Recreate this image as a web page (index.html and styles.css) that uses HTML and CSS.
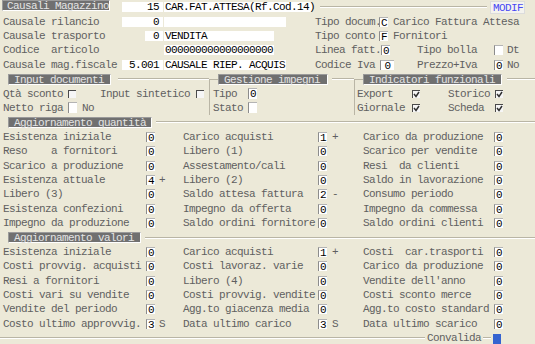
FILE: index.html
```html
<!DOCTYPE html>
<html lang="it">

<head>
    <meta charset="UTF-8">
    <title>Causali Magazzino</title>
    <link rel="stylesheet" href="styles.css">
</head>

<body>
    <div class="screen">
        <!-- testata causali -->
        <div class="top">
            <div class="trow">
                <div class="cap cap-main">Causali Magazzino</div>
                <div class="fld fld-num">15</div>
                <div class="fld w148">CAR.FAT.ATTESA(Rf.Cod.14)</div>
                <div class="tmode">
                    <span class="rule"></span>
                    <span class="mode">MODIF</span>
                </div>
            </div>
            <div class="trow">
                <div class="lbl">Causale rilancio</div>
                <div class="fld fld-num">0</div>
                <div class="fld w122"></div>
                <div class="tright">
                    <span class="lbl">Tipo docum.</span>
                    <span class="pair"><span class="box">C</span><span class="lbl">Carico Fattura Attesa</span></span>
                </div>
            </div>
            <div class="trow">
                <div class="lbl">Causale trasporto</div>
                <div class="fld fld-num short">0</div>
                <div class="fld w110">VENDITA</div>
                <div class="tright">
                    <span class="lbl">Tipo conto</span>
                    <span class="pair"><span class="box">F</span><span class="lbl">Fornitori</span></span>
                </div>
            </div>
            <div class="trow">
                <div class="lbl">Codice  articolo</div>
                <div></div>
                <div class="fld w110">000000000000000000</div>
                <div class="tright">
                    <span class="lbl">Linea fatt.</span>
                    <span class="box push">0</span>
                    <span class="lbl">Tipo bolla</span>
                    <span class="box"></span>
                    <span class="lbl">Dt</span>
                </div>
            </div>
            <div class="trow">
                <div class="lbl">Causale mag.fiscale</div>
                <div class="fld fld-num">5.001</div>
                <div class="fld w122">CAUSALE RIEP. ACQUIS</div>
                <div class="tright">
                    <span class="lbl">Codice Iva</span>
                    <span class="box wide">0</span>
                    <span class="lbl">Prezzo+Iva</span>
                    <span class="box">0</span>
                    <span class="lbl">No</span>
                </div>
            </div>
        </div>

        <!-- gruppi opzioni -->
        <div class="groups">
            <div class="grp">
                <div class="ghead">
                    <span class="cap cap-in">Input documenti</span>
                    <span class="rule"></span>
                </div>
                <div class="gbody body-in">
                    <span class="lbl">Qtà sconto</span><span class="cb"></span><span></span>
                    <span class="lbl">Input sintetico</span><span class="cb"></span>
                    <span class="lbl">Netto riga</span><span class="box tall"></span>
                    <span class="lbl no">No</span>
                </div>
            </div>
            <div class="grp">
                <div class="ghead">
                    <span class="corner"></span>
                    <span class="cap cap-imp">Gestione impegni</span>
                    <span class="rule"></span>
                </div>
                <div class="gbody body-imp side">
                    <span class="lbl">Tipo</span><span class="box tall">0</span>
                    <span class="lbl">Stato</span><span class="box tall"></span>
                </div>
            </div>
            <div class="grp">
                <div class="ghead">
                    <span class="corner"></span>
                    <span class="cap cap-ind">Indicatori funzionali</span>
                    <span class="rule"></span>
                </div>
                <div class="gbody body-ind side">
                    <span class="lbl">Export</span><span class="cb on"></span><span></span>
                    <span class="lbl">Storico</span><span class="cb on"></span>
                    <span class="lbl">Giornale</span><span class="cb on"></span><span></span>
                    <span class="lbl">Scheda</span><span class="cb on"></span>
                </div>
            </div>
        </div>

        <!-- aggiornamento quantita -->
        <div class="shead">
            <span class="cap cap-qta">Aggiornamento quantità</span>
            <span class="rule"></span>
        </div>
        <div class="sgrid" id="qta"></div>

        <!-- aggiornamento valori -->
        <div class="shead">
            <span class="cap cap-val">Aggiornamento valori</span>
            <span class="rule"></span>
        </div>
        <div class="sgrid" id="val"></div>

        <div class="foot">
            <span class="rule"></span>
            <span class="lbl">Convalida</span>
            <span class="rule tail"></span>
            <span class="ok"></span>
        </div>
    </div>

    <script>
        // righe: [etichetta, valore, segno] x 3 colonne
        const qta = [
            ['Esistenza iniziale', '0', '', 'Carico acquisti', '1', '+', 'Carico da produzione', '0'],
            ['Reso    a fornitori', '0', '', 'Libero (1)', '0', '', 'Scarico per vendite', '0'],
            ['Scarico a produzione', '0', '', 'Assestamento/cali', '0', '', 'Resi  da clienti', '0'],
            ['Esistenza attuale', '4', '+', 'Libero (2)', '0', '', 'Saldo in lavorazione', '0'],
            ['Libero (3)', '0', '', 'Saldo attesa fattura', '2', '-', 'Consumo periodo', '0'],
            ['Esistenza confezioni', '0', '', 'Impegno da offerta', '0', '', 'Impegno da commessa', '0'],
            ['Impegno da produzione', '0', '', 'Saldo ordini fornitore', '0', '', 'Saldo ordini clienti', '0']
        ];

        const val = [
            ['Esistenza iniziale', '0', '', 'Carico acquisti', '1', '+', 'Costi  car.trasporti', '0'],
            ['Costi provvig. acquisti', '0', '', 'Costi lavoraz. varie', '0', '', 'Carico da produzione', '0'],
            ['Resi a fornitori', '0', '', 'Libero (4)', '0', '', "Vendite dell'anno", '0'],
            ['Costi vari su vendite', '0', '', 'Costi provvig. vendite', '0', '', 'Costi sconto merce', '0'],
            ['Vendite del periodo', '0', '', 'Agg.to giacenza media', '0', '', 'Agg.to costo standard', '0'],
            ['Costo ultimo approvvig.', '3', 'S', 'Data ultimo carico', '3', 'S', 'Data ultimo scarico', '0']
        ];

        function renderGrid(id, rows) {
            const grid = document.getElementById(id);
            rows.forEach(r => {
                grid.innerHTML += `
          <span class="lbl">${r[0]}</span><span class="box">${r[1]}</span><span class="sign">${r[2]}</span>
          <span class="lbl">${r[3]}</span><span class="box">${r[4]}</span><span class="sign s2">${r[5]}</span>
          <span class="lbl">${r[6]}</span><span class="box">${r[7]}</span>
        `;
            });
        }

        renderGrid('qta', qta);
        renderGrid('val', val);
    </script>
</body>

</html>
```

FILE: styles.css
```css
* {
    box-sizing: border-box;
}

body {
    margin: 0;
    background-color: #ece9d8;
    font-family: "Liberation Mono", "Courier New", monospace;
    font-size: 11px;
    letter-spacing: -0.6px;
    color: #606060;
}

.screen {
    width: 535px;
    height: 344px;
    overflow: hidden;
}

.lbl {
    white-space: pre;
}

/* etichette scure di sezione */
.cap {
    display: block;
    height: 11px;
    line-height: 10px;
    padding-left: 5px;
    background-color: #707070;
    color: #e4e4e4;
    border-top: 1px solid #9a9a9a;
    border-left: 1px solid #9a9a9a;
    border-right: 1px solid #fff;
    border-bottom: 1px solid #fff;
    white-space: pre;
}

.rule {
    display: block;
    flex: 1;
    height: 2px;
    border-top: 1px solid #b9b5a5;
    border-bottom: 1px solid #fff;
}

/* campi */
.fld {
    height: 10px;
    line-height: 10px;
    padding: 0 1px;
    background-color: #fff;
    color: #000;
    white-space: pre;
}

.fld-num {
    width: 41px;
    text-align: right;
    padding-right: 4px;
}

.fld-num.short {
    width: 18px;
    justify-self: end;
    margin-right: 1px;
}

.w148 {
    width: 148px;
}

.w122 {
    width: 122px;
}

.w110 {
    width: 110px;
}

.box {
    display: block;
    width: 9px;
    height: 10px;
    line-height: 10px;
    padding-left: 1px;
    background-color: #fff;
    color: #000;
    border-left: 1px solid #8c8c8c;
    border-top: 1px solid #b4b4b4;
}

.box.tall {
    height: 11px;
}

.cb {
    display: block;
    width: 8px;
    height: 8px;
    background-color: #f6f6f6;
    border-top: 1px solid #4a4a4a;
    border-left: 1px solid #4a4a4a;
}

.cb.on {
    background: #f6f6f6 url("data:image/svg+xml,%3Csvg xmlns='http://www.w3.org/2000/svg' width='7' height='7'%3E%3Cpath d='M1 3 L3 5.5 L6 1' stroke='%23303030' stroke-width='1.5' fill='none'/%3E%3C/svg%3E") no-repeat 0 0;
}

/* testata */
.top {
    height: 72px;
}

.trow {
    display: grid;
    grid-template-columns: 122px 42px 151px 1fr;
    height: 14.4px;
    align-items: center;
}

.trow > .lbl {
    padding-left: 3px;
}

.cap-main {
    width: 108px;
    margin-left: 2px;
    align-self: start;
    padding-left: 4px;
}

.tmode {
    display: flex;
    align-items: center;
    padding-left: 5px;
    padding-right: 10px;
}

.mode {
    margin-left: 3px;
    width: 35px;
    height: 13px;
    line-height: 12px;
    padding-left: 2px;
    color: #4848f4;
    background-color: #f4f3ee;
    border: 1px solid #dcdcdc;
    align-self: start;
}

.tright {
    display: grid;
    grid-template-columns: 64px 38px 77px 13px auto;
    align-items: center;
}

.pair {
    grid-column: 2 / -1;
    display: flex;
    align-items: center;
    gap: 5px;
}

.box.push {
    margin-left: 2px;
}

.box.wide {
    width: 14px;
    margin-left: 1px;
    text-align: center;
    padding-left: 0;
}

/* gruppi */
.groups {
    display: grid;
    grid-template-columns: 209px 145px 1fr;
    height: 43.2px;
}

.ghead {
    display: flex;
    align-items: center;
    height: 14.4px;
}

.corner {
    align-self: flex-end;
    width: 9px;
    height: 7.2px;
    border-top: 1px solid #b9b5a5;
    border-left: 1px solid #b9b5a5;
}

.gbody {
    display: grid;
    grid-auto-rows: 14.4px;
    align-items: center;
}

.gbody.side {
    border-left: 1px solid #b9b5a5;
}

.cap-in {
    width: 103px;
    margin-left: 8px;
    margin-right: 7px;
}

.cap-imp {
    width: 110px;
    margin-right: 4px;
}

.cap-ind {
    width: 139px;
    margin-right: 5px;
}

.body-in {
    grid-template-columns: 65px 9px 23px 96px 9px;
    padding-left: 3px;
}

.body-in .no {
    padding-left: 5px;
    grid-column: 3 / span 2;
}

.body-imp {
    grid-template-columns: 35px 10px;
    padding-left: 3px;
}

.body-ind {
    grid-template-columns: 55px 9px 27px 47px 9px;
    padding-left: 2px;
}

/* sezioni aggiornamento */
.shead {
    display: flex;
    align-items: center;
    height: 14.4px;
}

.cap-qta {
    width: 144px;
    margin-left: 8px;
    margin-right: 4px;
}

.cap-val {
    width: 133px;
    margin-left: 8px;
    margin-right: 4px;
}

.sgrid {
    display: grid;
    grid-template-columns: 143px 9px 28px 135px 9px 36px 131px 9px;
    grid-auto-rows: 14.4px;
    align-items: center;
    padding-left: 3px;
}

.sign {
    padding-left: 4px;
}

.sign.s2 {
    padding-left: 5px;
}

/* piede */
.foot {
    display: flex;
    align-items: center;
    height: 14.4px;
    padding-right: 34px;
}

.foot .lbl {
    margin: 0 2px;
}

.foot .rule.tail {
    flex: 0 0 8px;
}

.ok {
    display: block;
    width: 8px;
    height: 11px;
    margin-left: 2px;
    margin-top: 3px;
    background-color: #3563d0;
}
```
